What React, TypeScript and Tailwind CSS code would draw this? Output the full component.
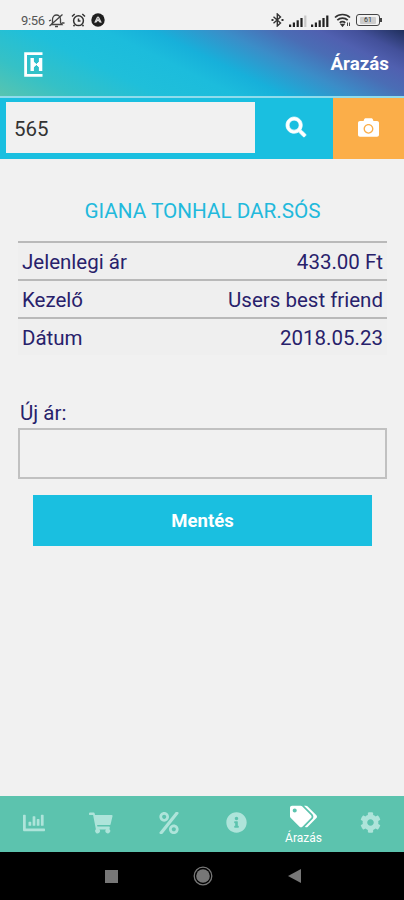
import React, { useState } from 'react'
import { FaSearch, FaCamera, FaPercent, FaInfoCircle, FaTags, FaCog, FaChartBar } from 'react-icons/fa'

const rows = [
    { label: 'Jelenlegi ár', value: '433.00 Ft' },
    { label: 'Kezelő', value: 'Users best friend' },
    { label: 'Dátum', value: '2018.05.23' },
]

const tabs = [
    { name: 'Statisztika', icon: <FaChartBar size={22} /> },
    { name: 'Kosár', icon: <CartIcon /> },
    { name: 'Kedvezmény', icon: <FaPercent size={22} /> },
    { name: 'Info', icon: <FaInfoCircle size={21} /> },
    { name: 'Árazás', icon: <FaTags size={27} /> },
    { name: 'Beállítások', icon: <FaCog size={21} /> },
]

function CartIcon() {
    return (
        <svg width="24" height="22" viewBox="0 0 24 22" fill="currentColor">
            <path d="M1 .5H4.6Q5.5.5 5.7 1.4L6 3H22.6Q23.8 3 23.5 4.2L21.6 12.2Q21.4 13.1 20.5 13.1H8.1L8.4 14.6H20Q21 14.6 20.8 15.6L20.4 17.2A2.4 2.4 0 1 1 17 17.4H10.4A2.4 2.4 0 1 1 6.9 17.3L4.1 3.1H1Q0 3.1 0 2.2V1.4Q0 .5 1 .5Z" />
        </svg>
    )
}

function Signal({ last }: { last: string }) {
    return (
        <svg width="18" height="12" viewBox="0 0 18 12" fill="#222">
            <rect x="0" y="9.5" width="2.2" height="2.5" />
            <rect x="3.8" y="7.5" width="2.2" height="4.5" />
            <rect x="7.6" y="5.3" width="2.2" height="6.7" />
            <rect x="11.4" y="3" width="2.2" height="9" />
            <rect x="15.2" y="0.5" width="2.2" height="11.5" fill={last} />
        </svg>
    )
}

function StatusBar() {
    return (
        <div className="flex h-[30px] items-center justify-between bg-[#f2f2f2] pt-2.5 pl-[21px] pr-[22px] text-[#333]">
            <div className="flex items-center">
                <span className="w-[27px] text-[13px] leading-none tracking-tight text-[#555]">9:56</span>
                {/* muted bell */}
                <svg width="17" height="15" viewBox="0 0 17 15" fill="none" stroke="#444" strokeWidth="1.3">
                    <path d="M4 11.5H14L12.5 9.5V6.5C12.5 3.5 10.5 2 8.5 2S4.5 3.5 4.5 6.5V9.5Z" />
                    <path d="M7 13.5H10M1.5 13L14.5 1.5M1 8L3 7M14 10L16.5 10" />
                </svg>
                {/* alarm */}
                <svg className="ml-[6px]" width="15" height="14" viewBox="0 0 15 14" fill="none" stroke="#333" strokeWidth="1.5">
                    <circle cx="7.5" cy="7.7" r="4.9" />
                    <path d="M1 3.5L3.7 1M14 3.5L11.3 1M7.5 5.5V8H9.5M3.5 12L2.5 13.3M11.5 12L12.5 13.3" />
                </svg>
                <svg className="ml-[5px]" width="14" height="14" viewBox="0 0 14 14">
                    <circle cx="7" cy="7" r="6.7" fill="#1f1f1f" />
                    <path d="M3.8 9.8L6.2 4.8Q7 3.5 7.8 4.8L10.2 9.8M5.2 9.2L7 6.3L8.8 9.2" fill="none" stroke="#ddd" strokeWidth="1.2" />
                </svg>
            </div>
            <div className="flex items-center">
                <svg width="13" height="14" viewBox="0 0 13 14" fill="none" stroke="#333" strokeWidth="1.4">
                    <path d="M2.5 3.7L9.5 10L6.3 13V1L9.5 4L2.5 10.3" />
                    <path d="M0.5 7H2.5M10.5 7H12.5" strokeWidth="1.8" />
                </svg>
                <span className="ml-[5px] pt-px"><Signal last="#c8c8c8" /></span>
                <span className="ml-1 pt-px"><Signal last="#222" /></span>
                <svg className="ml-[5px]" width="17" height="14" viewBox="0 0 17 14" fill="none" stroke="#333" strokeWidth="1.7">
                    <path d="M1 4.5C5 0.5 12 0.5 16 4.5M3.3 7.2C6.2 4.3 10.8 4.3 13.7 7.2M5.8 9.8C7.3 8.2 9.7 8.2 11.2 9.8" />
                    <path d="M7.5 11.5L8.5 12.8L9.5 11.5Z" fill="#333" />
                    <path d="M13.5 9.5V13M15.5 9.5V13" strokeWidth="0.9" />
                </svg>
                <div className="ml-[5px] flex h-3 w-6 items-center justify-center rounded-[3px] border border-[#444]">
                    <span className="rounded-[1px] bg-[#ccc] px-1 text-[7px] leading-[7px]">61</span>
                </div>
                <div className="h-1 w-0.5 bg-[#444]" />
            </div>
        </div>
    )
}

export default function App() {
    const [search, setSearch] = useState('565')
    const [price, setPrice] = useState('')
    const [activeTab, setActiveTab] = useState('Árazás')

    return (
        <div className="flex h-[900px] w-[404px] flex-col overflow-hidden bg-[#f1f1f1] font-['Roboto',sans-serif]">
            <StatusBar />

            {/* Header */}
            <header className="flex h-[66px] items-center justify-between bg-[linear-gradient(26deg,#58c4b0_0%,#35c1c6_14%,#1fbfda_30%,#1cbcdc_44%,#17b0da_53%,#3b8dc8_66%,#4a6db5_76%,#5060b0_84%,#43509a_91%,#1f2f5c_100%)] pl-6 pr-[15px] pt-0.5">
                <svg width="19" height="25" viewBox="0 0 19 25" fill="none" stroke="#fff">
                    <path d="M18.5 1.6H1.6V23.4H18.5" strokeWidth="2.8" />
                    <path d="M8.2 6V19M16.6 6V19" strokeWidth="3.4" />
                    <path d="M9 9.5L12.4 12.5L9 15.5ZM15.8 9.5L12.4 12.5L15.8 15.5Z" fill="#fff" strokeWidth="1" />
                </svg>
                <h1 className="pt-px text-[18.8px] font-bold text-white">Árazás</h1>
            </header>

            {/* Search */}
            <div className="flex h-[63px] border-t-2 border-[#8fdcec] bg-[#1abfe0]">
                <input
                    value={search}
                    onChange={(e) => setSearch(e.target.value)}
                    className="ml-1.5 mt-1 h-[51px] w-[249px] bg-[#f1f1f1] pl-2 pt-0.5 text-[20.5px] text-[#333] outline-none"
                />
                <button className="flex flex-1 items-center justify-center pb-[3px] pl-1 text-white">
                    <FaSearch size={20} stroke="currentColor" strokeWidth={18} className="overflow-visible" />
                </button>
                <button className="flex w-[71px] items-center justify-center bg-[#fbae49] pb-[3px] text-white">
                    <FaCamera size={21} />
                </button>
            </div>

            {/* Product */}
            <main className="flex flex-1 flex-col pl-[18px] pr-[17px]">
                <h2 className="mt-[37px] text-center text-[20.7px] leading-[30px] text-[#22b9dc]">GIANA TONHAL DAR.SÓS</h2>
                <div className="mt-[15px]">
                    {rows.map((row) => (
                        <div key={row.label} className="flex h-[38px] items-center justify-between border-t-2 border-[#b9b9b9] bg-[#efefef] px-1 pt-[3px] text-[20.5px] text-[#28216b]">
                            <span>{row.label}</span>
                            <span>{row.value}</span>
                        </div>
                    ))}
                </div>

                <label className="mt-[43px] pl-0.5 text-[20.5px] leading-[30px] text-[#28216b]">Új ár:</label>
                <input
                    value={price}
                    onChange={(e) => setPrice(e.target.value)}
                    className="h-[51px] border-2 border-[#c1c1c1] bg-transparent px-2 text-[20px] outline-none"
                />
                <button className="mx-[15px] mt-4 h-[51px] bg-[#1abfe0] pt-[3px] text-[18.5px] font-bold text-white">Mentés</button>
            </main>

            {/* Tabs */}
            <nav className="grid h-14 grid-cols-6 bg-[#5cc3ae]">
                {tabs.map((tab) => (
                    <button
                        key={tab.name}
                        aria-label={tab.name}
                        onClick={() => setActiveTab(tab.name)}
                        className={`flex flex-col items-center justify-center pl-px ${activeTab === tab.name ? 'text-white' : 'pb-[3px] text-[#aee4da]'}`}
                    >
                        {tab.icon}
                        {activeTab === tab.name && <span className="text-[12px] leading-4">{tab.name}</span>}
                    </button>
                ))}
            </nav>

            {/* Android navigation */}
            <div className="flex h-12 items-center justify-center gap-[75px] bg-black pl-0.5">
                <div className="h-[13px] w-[13px] bg-[#777]" />
                <svg width="20" height="20" viewBox="0 0 20 20">
                    <circle cx="10" cy="10" r="8.8" fill="none" stroke="#777" strokeWidth="1.3" />
                    <circle cx="10" cy="10" r="6.8" fill="#777" />
                </svg>
                <svg width="13" height="14" viewBox="0 0 13 14" fill="#777">
                    <path d="M13 0V14L0 7Z" />
                </svg>
            </div>
        </div>
    )
}
